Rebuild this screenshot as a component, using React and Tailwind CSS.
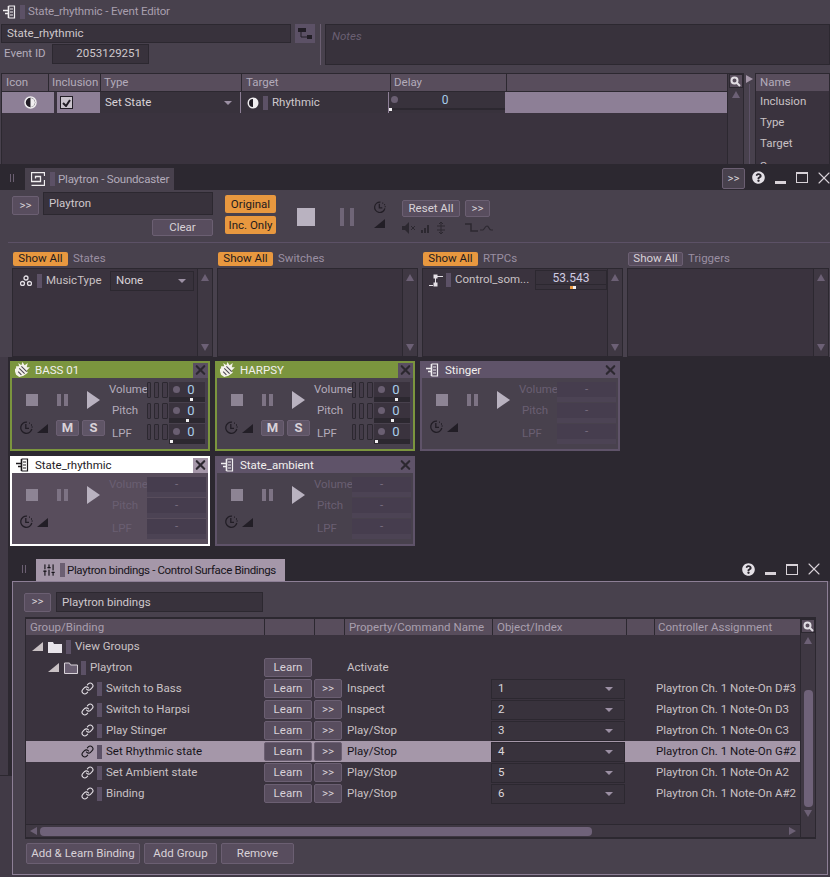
import { Link, SlidersVertical, X } from "lucide-react";
import { FaQuestionCircle } from "react-icons/fa";

function EventIcon({ color = "#f0eef0" }) {
  return (
    <svg width="14" height="14" viewBox="0 0 14 14" fill="none" stroke={color} strokeWidth="1.2">
      <path d="M0 5.500h5M2 8.500h3M5.500 1v12" strokeWidth="1.600" />
      <path d="M5.500 1h6v12h-6M7 4h3M7 7h3M7 10h3" />
    </svg>
  );
}

function InstrumentIcon() {
  return (
    <svg width="16" height="16" viewBox="0 0 15 15" fill="none">
      <path d="M1 4l3 0-1-3 3 2 1-3 2 3 3-2-1 4 3 0-3 3 1 2-4 3-4 1-3-2-1-3-2-2 3-1z" fill="#f4f2ea" />
      <path d="M4 6l5 5M6 4l5 5M3 9l3 3" stroke="#4a4450" strokeWidth="1" />
    </svg>
  );
}

function ClockIcon({ size = 14, color = "#221e26" }) {
  return (
    <svg width={size} height={size} viewBox="0 0 14 14" fill="none" stroke={color} strokeWidth="1.300">
      <path d="M8 1.200A5.600 5.600 0 1 0 12.800 8" />
      <path d="M6.800 3v4.400h3.200" />
      <path d="M10 2.200h1M12 4h1M12.600 6h1" strokeDasharray="1 1" />
    </svg>
  );
}

function Corner({ color = "#221e26" }) {
  return (
    <svg width="11" height="9" viewBox="0 0 11 9" className="shrink-0">
      <polygon points="0,9 11,0 11,9" fill={color} />
    </svg>
  );
}

function SearchBox() {
  return (
    <div className="w-[14px] h-[14px] bg-[#584d5c] border border-[#2c2830] flex items-center justify-center shrink-0">
      <svg width="11" height="11" viewBox="0 0 11 11" fill="none" stroke="#e2dee4" strokeWidth="2">
        <circle cx="4.500" cy="4.500" r="3" />
        <path d="M7 7l3 3" />
      </svg>
    </div>
  );
}

function ArrowUp({ c = "#6c6075" }) {
  return <div className="w-0 h-0 border-l-[4px] border-r-[4px] border-b-[7px] border-l-transparent border-r-transparent" style={{ borderBottomColor: c }} />;
}

function ArrowDown({ c = "#6c6075" }) {
  return <div className="w-0 h-0 border-l-[4px] border-r-[4px] border-t-[7px] border-l-transparent border-r-transparent" style={{ borderTopColor: c }} />;
}

function Caret() {
  return <div className="w-0 h-0 border-l-[4px] border-r-[4px] border-t-[4px] border-l-transparent border-r-transparent border-t-[#9c90a4]" />;
}

function Btn({ children, className = "" }) {
  return (
    <div className={`bg-[#584d5e] border border-[#6b5f72] rounded-[2px] text-[#d8d2d8] flex items-center justify-center shrink-0 ${className}`}>
      {children}
    </div>
  );
}

function Orange({ children, className = "" }) {
  return (
    <div className={`bg-[#e8983f] rounded-[2px] text-[#1d1a1e] flex items-center justify-center pt-px shrink-0 ${className}`}>
      {children}
    </div>
  );
}

function Tag() {
  return <div className="w-[5px] h-[14px] bg-[#5c5166] shrink-0" />;
}

function ListBox({ width, children }) {
  return (
    <div className="h-[89px] bg-[#3a333e] border border-[#2c2830] flex shrink-0" style={{ width }}>
      <div className="flex-1 min-w-0">{children}</div>
      <div className="w-[15px] border-l border-[#2c2830] bg-[#3f3843] flex flex-col items-center justify-between py-[5px]">
        <ArrowUp />
        <ArrowDown />
      </div>
    </div>
  );
}

function Transport() {
  return (
    <div className="flex items-center h-[20px] pl-[14px]">
      <div className="w-[12px] h-[12px] bg-[#8d8494]" />
      <div className="flex gap-[3px] ml-[19px]">
        <div className="w-[4px] h-[12px] bg-[#7d7384]" />
        <div className="w-[4px] h-[12px] bg-[#7d7384]" />
      </div>
      <svg width="13" height="18" viewBox="0 0 13 18" className="ml-[19px]">
        <polygon points="0,0 13,9 0,18" fill="#b9b2c0" />
      </svg>
    </div>
  );
}

function Values({ rows }) {
  return (
    <div className="flex flex-col w-[36px] gap-[1px] shrink-0">
      {rows.map((r, i) => (
        <div key={i} className="h-[20px] flex flex-col bg-[#3a333e]">
          <div className="h-[15px] relative flex items-center justify-center text-[#a9cdea]">
            <div className="absolute left-[4px] top-[4px] w-[7px] h-[7px] rounded-full bg-[#6a5f72]" />
            <span className="ml-[8px] text-[13px]">0</span>
          </div>
          <div className="h-[5px] relative bg-[#2c2830]">
            <div className="absolute top-[1px] w-[3px] h-[3px] bg-[#f0eef0]" style={{ left: r }} />
          </div>
        </div>
      ))}
    </div>
  );
}

function Meters() {
  return (
    <div className="flex flex-col gap-[5px] mr-[1px] shrink-0">
      {[0, 1, 2].map((i) => (
        <div key={i} className="flex gap-[3px]">
          <div className="w-[4px] h-[16px] bg-[#433b48] border border-[#2c2830] rounded-[1px]" />
          <div className="w-[5px] h-[16px] bg-[#433b48] border border-[#2c2830] rounded-[1px]" />
          <div className="w-[6px] h-[16px] bg-[#433b48] border border-[#2c2830] rounded-[1px]" />
        </div>
      ))}
    </div>
  );
}

function Card({ name, variant }) {
  const active = variant === "green";
  const selected = variant === "white";
  const borderCls = active ? "bg-[#7b953e]" : selected ? "bg-white" : "bg-[#5f5369]";
  const inner = selected ? "bg-[#584d5c]" : "bg-[#48414d]";
  const labelCls = active ? "text-[#b3abba]" : "text-[#6a5f72]";
  return (
    <div className={`w-[200px] h-[90px] p-[2px] pt-0 shrink-0 flex flex-col ${borderCls}`}>
      <div className="h-[17px] flex items-center shrink-0 pt-[1px]">
        <div className="w-[16px] ml-[3px] flex justify-center">
          {active ? <InstrumentIcon /> : <EventIcon color={selected ? "#1d1a1e" : "#f0eef0"} />}
        </div>
        <span className={`ml-[4px] pt-[2px] ${selected ? "text-[#1d1a1e]" : "text-[#f2f0ee]"}`}>{name}</span>
        <div className={`ml-auto w-[15px] h-[15px] flex items-center justify-center ${active ? "bg-[#5a4f62]" : ""} ${selected ? "bg-[#a597a9]" : ""}`}>
          <X size={18} strokeWidth={3.4} color="#2c2830" />
        </div>
      </div>
      <div className={`flex-1 flex pt-[4px] ${inner}`}>
        <div className="w-[97px] shrink-0 pt-[8px]">
          <Transport />
          <div className="flex items-center pl-[7px] mt-[10px]">
            <ClockIcon size={14} />
            <div className="ml-[4px]"><Corner /></div>
            {active && (
              <>
                <Btn className="w-[23px] h-[16px] ml-[8px] font-bold text-[13px] !bg-[#5f5566]">M</Btn>
                <Btn className="w-[23px] h-[16px] ml-[3px] font-bold text-[13px] !bg-[#5f5566]">S</Btn>
              </>
            )}
          </div>
        </div>
        <div className={`w-[36px] flex flex-col -mt-[3px] shrink-0 ${labelCls}`}>
          <div className="h-[21px] flex items-center">Volume</div>
          <div className="h-[21px] flex items-center pl-[3px]">Pitch</div>
          <div className="h-[25px] flex items-center pl-[3px]">LPF</div>
        </div>
        <div className="ml-[2px] flex">
          {active ? (
            <>
              <Meters />
              <Values rows={[21, 17, 1]} />
            </>
          ) : (
            <div className="w-[59px] flex flex-col gap-[1px]">
              {[0, 1, 2].map((i) => (
                <div key={i} className="h-[20px] flex flex-col bg-[#463d4e]">
                  <div className="h-[15px] flex items-center justify-center text-[#7a6f82]">-</div>
                  <div className="h-[5px] bg-[#4c4354]" />
                </div>
              ))}
            </div>
          )}
        </div>
      </div>
    </div>
  );
}

function WindowButtons() {
  return (
    <div className="flex items-center">
      <div className="w-[22px] flex justify-center"><FaQuestionCircle size={13} color="#e4e0e6" /></div>
      <div className="w-[22px] flex justify-center pt-[9px]"><div className="w-[11px] h-[3px] bg-[#d8d2d8]" /></div>
      <div className="w-[22px] flex justify-center"><div className="w-[12px] h-[11px] border border-t-[2px] border-[#d8d2d8]" /></div>
      <div className="w-[22px] flex justify-center"><X size={20} strokeWidth={1.300} color="#d8d2d8" /></div>
    </div>
  );
}

const bindings = [
  { name: "Switch to Bass", prop: "Inspect", idx: "1", ctrl: "Playtron Ch. 1 Note-On D#3" },
  { name: "Switch to Harpsi", prop: "Inspect", idx: "2", ctrl: "Playtron Ch. 1 Note-On D3" },
  { name: "Play Stinger", prop: "Play/Stop", idx: "3", ctrl: "Playtron Ch. 1 Note-On C3" },
  { name: "Set Rhythmic state", prop: "Play/Stop", idx: "4", ctrl: "Playtron Ch. 1 Note-On G#2", selected: true },
  { name: "Set Ambient state", prop: "Play/Stop", idx: "5", ctrl: "Playtron Ch. 1 Note-On A2" },
  { name: "Binding", prop: "Play/Stop", idx: "6", ctrl: "Playtron Ch. 1 Note-On A#2" },
];

function FolderIcon({ open }) {
  return (
    <svg width="14" height="12" viewBox="0 0 14 12">
      {open ? (
        <path d="M.5 1h5l1 2h7v8.500h-13z" fill="#6a5f72" stroke="#d8d2d8" />
      ) : (
        <path d="M0 1h5l1 2h8v9H0z" fill="#e8e4ea" />
      )}
    </svg>
  );
}

function BindingRow({ b }) {
  const sel = b.selected;
  return (
    <div className={`h-[21px] flex items-center ${sel ? "bg-[#a597a9] text-[#17141a]" : "text-[#c9c1c4]"}`}>
      <div className="w-[238px] flex items-center pl-[55px] shrink-0">
        <Link size={13} strokeWidth={2} color={sel ? "#17141a" : "#e4e0e6"} />
        <div className="ml-[3px]"><Tag /></div>
        <span className="ml-[4px] pt-px whitespace-nowrap">{b.name}</span>
      </div>
      <Btn className="w-[48px] h-[19px]">Learn</Btn>
      <Btn className="w-[28px] h-[19px] ml-[2px]">&gt;&gt;</Btn>
      <div className="w-[149px] pl-[5px] pt-px shrink-0">{b.prop}</div>
      <div className="w-[134px] h-[20px] bg-[#38323c] border border-[#2c2830] flex items-center justify-between pl-[6px] pr-[11px] text-[#dcd6da] shrink-0">
        <span className="pt-px">{b.idx}</span>
        <Caret />
      </div>
      <div className="ml-[31px] pt-px whitespace-nowrap">{b.ctrl}</div>
    </div>
  );
}

export default function App() {
  return (
    <div className="w-[830px] h-[877px] overflow-hidden bg-[#2c2830] text-[11.5px] text-[#c9c1c4] font-['Roboto',sans-serif] flex flex-col">
      {/* Event editor */}
      <section className="h-[165px] bg-[#48414d] shrink-0 flex flex-col overflow-hidden">
        <div className="h-[24px] flex items-center pl-[3px] shrink-0">
          <EventIcon />
          <div className="ml-[3px]"><Tag /></div>
          <span className="ml-[3px] text-[#a99fae] tracking-[-0.15px]">State_rhythmic - Event Editor</span>
        </div>
        <div className="h-[41px] flex shrink-0">
          <div className="w-[291px] pl-[1px] shrink-0">
            <div className="h-[19px] bg-[#38323c] border border-[#2c2830] pl-[5px] pt-px flex items-center text-[#cfc8cc]">State_rhythmic</div>
            <div className="flex items-center mt-[1px]">
              <span className="w-[51px] pl-[3px] text-[#b3abba]">Event ID</span>
              <div className="w-[97px] h-[20px] bg-[#38323c] border border-[#2c2830] flex items-center justify-end pr-[7px] text-[#cfc8cc]">2053129251</div>
            </div>
          </div>
          <div className="w-[20px] h-[19px] ml-[4px] bg-[#5c5166] flex items-center justify-center shrink-0">
            <svg width="16" height="13" viewBox="0 0 16 13">
              <path d="M1 1h8v4H1zM10 8h5v4h-5z" fill="#221e26" />
              <path d="M4 5v5h6" stroke="#221e26" fill="none" />
            </svg>
          </div>
          <div className="w-[1px] bg-[#6b5f72] ml-[5px]" />
          <div className="flex-1 ml-[4px] bg-[#38323c] border border-[#2c2830] pl-[6px] pt-[3px] italic text-[#6b6073]">Notes</div>
        </div>
        <div className="flex-1 mt-[8px] flex min-h-0 border-b border-[#2c2830]">
          <div className="w-[743px] ml-[1px] border border-[#2c2830] border-b-0 bg-[#3a333e] flex shrink-0">
            <div className="w-[725px] shrink-0">
              <div className="h-[18px] bg-[#584d5c] border-b border-[#2c2830] flex text-[#b3abba] items-center">
                <div className="w-[46px] pl-[4px]">Icon</div>
                <div className="w-[52px] pl-[3px] h-full flex items-center border-l border-[#2c2830]">Inclusion</div>
                <div className="w-[141px] pl-[3px] h-full flex items-center border-l border-[#2c2830]">Type</div>
                <div className="w-[149px] pl-[4px] h-full flex items-center border-l border-[#2c2830]">Target</div>
                <div className="w-[116px] pl-[3px] h-full flex items-center border-l border-[#2c2830]">Delay</div>
                <div className="flex-1 h-full border-l border-[#2c2830]" />
              </div>
              <div className="h-[21px] bg-[#8d7f96] flex items-center">
                <div className="w-[52px] flex justify-center pl-[4px] shrink-0">
                  <svg width="13" height="13" viewBox="0 0 13 13">
                    <circle cx="6.500" cy="6.500" r="5.500" fill="#221e26" stroke="#f0eef0" strokeWidth="1.500" />
                    <path d="M6.500 2a4.500 4.500 0 0 1 0 9z" fill="#f0eef0" />
                  </svg>
                </div>
                <div className="w-[3px] h-full bg-[#3a333e] shrink-0" />
                <div className="w-[43px] pl-[3px] shrink-0">
                  <div className="w-[13px] h-[13px] bg-[#c9c3cc] border border-[#221e26] flex items-center justify-center">
                    <svg width="9" height="8" viewBox="0 0 9 8" fill="none" stroke="#221e26" strokeWidth="2"><path d="M1 4l3 3 4-6" /></svg>
                  </div>
                </div>
                <div className="w-[140px] h-full bg-[#38323c] flex items-center justify-between pl-[5px] pr-[8px] text-[#d8d2d8] shrink-0">
                  <span className="pt-px">Set State</span>
                  <Caret />
                </div>
                <div className="w-[147px] h-full bg-[#38323c] ml-[1px] flex items-center pl-[6px] text-[#cfc8cc] shrink-0">
                  <svg width="12" height="12" viewBox="0 0 12 12">
                    <circle cx="6" cy="6" r="5.500" fill="#f0eef0" />
                    <path d="M6 2a4 4 0 0 0 0 8z" fill="#221e26" />
                  </svg>
                  <div className="ml-[4px]"><Tag /></div>
                  <span className="ml-[4px] pt-px">Rhythmic</span>
                </div>
                <div className="w-[116px] h-full bg-[#38323c] ml-[1px] flex flex-col shrink-0">
                  <div className="h-[16px] relative flex items-center justify-center text-[#a9cdea] text-[12px] pr-[4px]">
                    <div className="absolute left-[2px] top-[4px] w-[7px] h-[7px] rounded-full bg-[#6a5f72]" />
                    0
                  </div>
                  <div className="h-[2px] bg-[#2c2830] relative">
                    <div className="absolute left-0 top-0 w-[3px] h-[3px] bg-[#f0eef0]" />
                  </div>
                </div>
              </div>
            </div>
            <div className="w-[16px] border-l border-[#2c2830] bg-[#3f3843] flex flex-col items-center">
              <SearchBox />
              <div className="mt-[3px]"><ArrowUp /></div>
            </div>
          </div>
          <div className="w-[11px] flex flex-col items-center pt-[2px] shrink-0">
            <div className="w-0 h-0 border-t-[4px] border-b-[4px] border-l-[7px] border-t-transparent border-b-transparent border-l-[#a597a9]" />
            <div className="w-px flex-1 mt-[1px] bg-[#5c5166]" />
          </div>
          <div className="flex-1 border border-[#2c2830] border-b-0 bg-[#3a333e] text-[#c9c1c4] overflow-hidden">
            <div className="h-[17px] bg-[#584d5c] pl-[4px] flex items-center text-[#b3abba]">Name</div>
            <div className="h-[21px] pl-[4px] pt-px flex items-center">Inclusion</div>
            <div className="h-[21px] pl-[4px] pt-px flex items-center">Type</div>
            <div className="h-[21px] pl-[4px] pt-px flex items-center">Target</div>
            <div className="h-[21px] pl-[4px] pt-[5px] flex items-center">Scope</div>
          </div>
        </div>
      </section>

      {/* Soundcaster */}
      <section className="h-[192px] shrink-0 flex flex-col">
        <div className="h-[25px] flex items-end bg-[#2c2830] shrink-0">
          <div className="w-[25px] h-full flex items-center pl-[10px] gap-[2px] shrink-0">
            <div className="w-[1px] h-[8px] bg-[#6b5f72]" />
            <div className="w-[1px] h-[8px] bg-[#6b5f72]" />
          </div>
          <div className="w-[149px] h-[22px] bg-[#48414d] flex items-center pl-[6px] shrink-0">
            <svg width="14" height="14" viewBox="0 0 14 14" fill="none" stroke="#f0eef0" strokeWidth="1.300" className="shrink-0">
              <path d="M13.500 4V.5H.5v9h9v-5h-5v2" />
              <path d="M.5 13.500h13V8" />
            </svg>
            <div className="ml-[5px]"><Tag /></div>
            <span className="ml-[3px] pt-px text-[#b3abba] whitespace-nowrap tracking-[-0.2px]">Playtron - Soundcaster</span>
          </div>
          <Btn className="ml-auto w-[23px] h-[21px] mb-[1px] !bg-[#48414d]">&gt;&gt;</Btn>
          <div className="w-[85px] h-full flex items-center pl-[2px] shrink-0">
            <WindowButtons />
          </div>
        </div>
        <div className="flex-1 bg-[#48414d] flex flex-col min-h-0">
          <div className="h-[52px] flex shrink-0 pt-[2px] pl-[12px]">
            <Btn className="w-[27px] h-[19px] mt-[4px]">&gt;&gt;</Btn>
            <div className="ml-[4px] w-[170px] shrink-0">
              <div className="h-[23px] bg-[#38323c] border border-[#2c2830] flex items-center pl-[5px] pt-px text-[#cfc8cc]">Playtron</div>
              <Btn className="w-[61px] h-[17px] mt-[4px] ml-[109px]">Clear</Btn>
            </div>
            <div className="ml-[12px] w-[51px] shrink-0 pt-[3px]">
              <Orange className="h-[18px]">Original</Orange>
              <Orange className="h-[18px] mt-[3px]">Inc. Only</Orange>
            </div>
            <div className="w-[18px] h-[18px] bg-[#b9b2c0] ml-[21px] mt-[16px] shrink-0" />
            <div className="flex gap-[6px] ml-[25px] mt-[16px] shrink-0">
              <div className="w-[4px] h-[18px] bg-[#6f6577]" />
              <div className="w-[4px] h-[18px] bg-[#6f6577]" />
            </div>
            <div className="w-[14px] ml-[18px] mt-[9px] shrink-0 flex flex-col items-center gap-[5px]">
              <ClockIcon size={13} />
              <Corner />
            </div>
            <div className="ml-[16px] mt-[8px] shrink-0">
              <div className="flex gap-[5px]">
                <Btn className="w-[58px] h-[17px]">Reset All</Btn>
                <Btn className="w-[25px] h-[17px]">&gt;&gt;</Btn>
              </div>
              <div className="flex items-center mt-[5px] gap-[5px] h-[12px]">
                <svg width="14" height="12" viewBox="0 0 14 12" fill="#2c2830"><path d="M0 4h3l4-4v12L3 8H0z" /><path d="M9 4l4 4M13 4l-4 4" stroke="#2c2830" /></svg>
                <svg width="10" height="10" viewBox="0 0 10 10" fill="#2c2830"><path d="M0 7h2v3H0zM3 5h2v5H3zM6 2h2v8H6z" /></svg>
                <svg width="10" height="12" viewBox="0 0 10 12" fill="none" stroke="#2c2830"><path d="M5 0v12M1 4h8M1 8h8M3 2l2-2 2 2M3 10l2 2 2-2" /></svg>
                <svg width="14" height="10" viewBox="0 0 14 10" fill="none" stroke="#2c2830" strokeWidth="1.500" className="ml-[14px]"><path d="M0 1h6v7h7" /></svg>
                <svg width="13" height="8" viewBox="0 0 13 8" fill="none" stroke="#2c2830" strokeWidth="1.200" className="-ml-[4px]"><path d="M0 6h3c1 0 2-4 4-4s2 4 4 4h2" /></svg>
              </div>
            </div>
          </div>
          <div className="h-px bg-[#5c5166] ml-[8px] shrink-0" />
          <div className="flex pl-[12px] gap-[4px] pt-[8px] shrink-0">
            {[
              { label: "States", on: true, w: 201 },
              { label: "Switches", on: true, w: 201 },
              { label: "RTPCs", on: true, w: 201 },
              { label: "Triggers", on: false, w: 202 },
            ].map((c, i) => (
              <div key={c.label} className="shrink-0" style={{ width: c.w }}>
                <div className="flex items-center h-[15px] mb-[2px] pl-[1px]">
                  {c.on ? <Orange className="w-[55px] h-[14px]">Show All</Orange> : <Btn className="w-[55px] h-[14px]">Show All</Btn>}
                  <span className="ml-[5px] pt-px text-[#9a8fa2]">{c.label}</span>
                </div>
                <ListBox width={c.w}>
                  {i === 0 && (
                    <div className="flex items-center pl-[7px] pt-[1px] h-[22px]">
                      <svg width="12" height="11" viewBox="0 0 12 11" fill="none" stroke="#e4e0e6" strokeWidth="1.300" className="shrink-0">
                        <circle cx="6" cy="3" r="2" /><circle cx="2.500" cy="8.500" r="2" /><circle cx="9.500" cy="8.500" r="2" />
                      </svg>
                      <div className="ml-[5px]"><Tag /></div>
                      <span className="ml-[4px] w-[64px] shrink-0 text-[#c9c1c4]">MusicType</span>
                      <div className="w-[84px] h-[20px] bg-[#38323c] border border-[#2c2830] flex items-center justify-between pl-[5px] pr-[7px] text-[#d8d2d8] shrink-0">
                        <span>None</span>
                        <Caret />
                      </div>
                    </div>
                  )}
                  {i === 2 && (
                    <div className="flex pl-[6px] pt-[1px]">
                      <div className="flex items-center h-[20px] shrink-0">
                        <svg width="14" height="13" viewBox="0 0 14 13" fill="none" stroke="#e4e0e6" className="shrink-0">
                          <path d="M0 11.500h4M6.500 2v9M8 2.500h6" />
                          <rect x="5" y="1" width="3" height="3" fill="#e4e0e6" />
                          <rect x="5" y="9" width="3" height="3" fill="#e4e0e6" />
                        </svg>
                        <div className="ml-[3px]"><Tag /></div>
                        <span className="ml-[4px] w-[80px] text-[#c9c1c4]">Control_som...</span>
                      </div>
                      <div className="w-[72px] h-[20px] bg-[#38323c] border border-[#2c2830] flex flex-col shrink-0">
                        <div className="h-[14px] flex items-center justify-center text-[#d0cce2] text-[12px] border-b border-[#2c2830]">53.543</div>
                        <div className="flex-1 relative">
                          <div className="absolute left-[34px] top-[1px] w-[3px] h-[3px] bg-[#e8983f]" />
                          <div className="absolute left-[37px] top-[1px] w-[3px] h-[3px] bg-[#f0eef0]" />
                        </div>
                      </div>
                    </div>
                  )}
                </ListBox>
              </div>
            ))}
          </div>
        </div>
      </section>

      {/* Soundcaster tiles */}
      <section className="h-[200px] shrink-0 flex">
        <div className="w-[8px] bg-[#413a46] shrink-0" />
        <div className="flex-1 pl-[2px] pt-[4px] flex flex-col gap-[5px]">
          <div className="flex gap-[5px]">
            <Card name="BASS 01" variant="green" />
            <Card name="HARPSY" variant="green" />
            <Card name="Stinger" variant="dim" />
          </div>
          <div className="flex gap-[5px]">
            <Card name="State_rhythmic" variant="white" />
            <Card name="State_ambient" variant="dim" />
          </div>
        </div>
      </section>

      {/* Control surface bindings */}
      <section className="flex-1 flex min-h-0 bg-[#413a46]">
        <div className="w-[12px] shrink-0 flex flex-col">
          <div className="h-[218px] flex shrink-0">
            <div className="w-[8px]" />
            <div className="w-[4px] bg-[#2c2830]" />
          </div>
          <div className="h-px bg-[#2c2830]" />
        </div>
        <div className="flex-1 flex flex-col min-h-0 pr-[3px]">
          <div className="h-[24px] flex items-end shrink-0 bg-[#2c2830] -mr-[3px]">
            <div className="w-[24px] h-full flex items-center pl-[10px] gap-[2px] shrink-0">
              <div className="w-[1px] h-[8px] bg-[#6b5f72]" />
              <div className="w-[1px] h-[8px] bg-[#6b5f72]" />
            </div>
            <div className="w-[249px] h-[22px] bg-[#a597a9] flex items-center pl-[6px] text-[#17141a] shrink-0">
              <SlidersVertical size={14} strokeWidth={2} color="#17141a" className="shrink-0" />
              <div className="ml-[4px] w-[5px] h-[14px] bg-[#6b5f72] shrink-0" />
              <span className="ml-[2px] pt-[2px] whitespace-nowrap tracking-[-0.35px]">Playtron bindings - Control Surface Bindings</span>
            </div>
            <div className="ml-auto h-full flex items-center pr-[6px]">
              <WindowButtons />
            </div>
          </div>
          <div className="h-[294px] bg-[#48414d] border border-[#8d7f96] flex flex-col shrink-0 pl-[12px] pr-[11px]">
            <div className="flex items-center pt-[10px] shrink-0 -ml-[1px]">
              <Btn className="w-[27px] h-[19px]">&gt;&gt;</Btn>
              <div className="w-[207px] h-[20px] ml-[5px] bg-[#38323c] border border-[#2c2830] flex items-center pl-[5px] pt-px text-[#cfc8cc]">Playtron bindings</div>
            </div>
            <div className="mt-[5px] h-[222px] border-x border-y-[2px] border-[#2c2830] bg-[#3a333e] flex shrink-0">
              <div className="w-[774px] shrink-0 flex flex-col min-h-0">
                <div className="h-[16px] bg-[#584d5c] flex items-center text-[#a99fae] shrink-0">
                  <div className="w-[238px] pl-[4px] pt-px">Group/Binding</div>
                  <div className="w-[50px] h-full border-l border-[#2c2830]" />
                  <div className="w-[30px] h-full border-l border-[#2c2830]" />
                  <div className="w-[148px] pl-[4px] pt-px h-full flex items-center border-l border-[#2c2830]">Property/Command Name</div>
                  <div className="w-[134px] pl-[4px] pt-px h-full flex items-center border-l border-[#2c2830]">Object/Index</div>
                  <div className="w-[28px] h-full border-l border-[#2c2830]" />
                  <div className="flex-1 pl-[3px] pt-px h-full flex items-center border-l border-[#2c2830]">Controller Assignment</div>
                </div>
                <div className="flex-1 min-h-0 pt-[1px]">
                  <div className="h-[21px] flex items-center pl-[6px]">
                    <div className="w-[8px]"><Corner color="#c9c1c4" /></div>
                    <div className="ml-[8px]"><FolderIcon /></div>
                    <div className="ml-[4px]"><Tag /></div>
                    <span className="ml-[4px] pt-px">View Groups</span>
                  </div>
                  <div className="h-[21px] flex items-center">
                    <div className="w-[238px] flex items-center pl-[22px] shrink-0">
                      <div className="w-[8px]"><Corner color="#c9c1c4" /></div>
                      <div className="ml-[8px]"><FolderIcon open /></div>
                      <div className="ml-[3px]"><Tag /></div>
                      <span className="ml-[4px] pt-px">Playtron</span>
                    </div>
                    <Btn className="w-[48px] h-[19px]">Learn</Btn>
                    <span className="ml-[35px] pt-px">Activate</span>
                  </div>
                  {bindings.map((b) => (
                    <BindingRow key={b.name} b={b} />
                  ))}
                </div>
                <div className="h-[13px] border-t border-[#2c2830] flex items-center shrink-0 bg-[#3f3843]">
                  <div className="w-0 h-0 ml-[4px] border-t-[4px] border-b-[4px] border-r-[7px] border-t-transparent border-b-transparent border-r-[#6c6075]" />
                  <div className="ml-[3px] w-[552px] h-[9px] rounded-[4px] bg-[#6f6279]" />
                  <div className="ml-auto mr-[4px] w-0 h-0 border-t-[4px] border-b-[4px] border-l-[7px] border-t-transparent border-b-transparent border-l-[#6c6075]" />
                </div>
              </div>
              <div className="w-[15px] border-l border-[#2c2830] bg-[#3f3843] flex flex-col items-center shrink-0">
                <SearchBox />
                <div className="mt-[4px]"><ArrowUp /></div>
                <div className="w-[9px] h-[117px] mt-[46px] rounded-[4px] bg-[#6f6279] shrink-0" />
                <div className="mt-[3px]"><ArrowDown /></div>
              </div>
            </div>
            <div className="flex gap-[4px] mt-[4px] shrink-0 ml-[1px]">
              <Btn className="w-[114px] h-[21px]">Add &amp; Learn Binding</Btn>
              <Btn className="w-[73px] h-[21px]">Add Group</Btn>
              <Btn className="w-[73px] h-[21px]">Remove</Btn>
            </div>
          </div>
        </div>
      </section>
    </div>
  );
}
